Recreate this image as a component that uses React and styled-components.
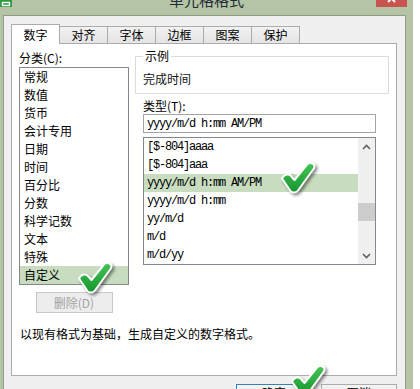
import React from 'react'
import styled, { createGlobalStyle } from 'styled-components'

const GlobalStyle = createGlobalStyle`
  * {
    margin: 0;
    padding: 0;
    box-sizing: border-box;
  }
  html, body {
    width: 420px;
    height: 389px;
    overflow: hidden;
    background: #fff;
  }
  body {
    font-family: "Noto Sans CJK SC", "Liberation Sans", sans-serif;
    font-size: 12px;
    color: #000;
  }
`

const mono = `"Liberation Mono", "Noto Sans CJK SC", monospace`

const Window = styled.div`
  position: relative;
  width: 413px;
  height: 389px;
  background: #b5c4a5;
  display: flex;
  flex-direction: column;
`
const TitleBar = styled.div`
  flex-shrink: 0;
  height: 15px;
  display: grid;
  grid-template-columns: 1fr auto 1fr;
  align-items: start;
  overflow: hidden;
`
const Title = styled.div`
  font-size: 15px;
  line-height: 16px;
  margin-top: -8px;
  color: #1f2b38;
  white-space: nowrap;
`
const CloseBox = styled.div`
  justify-self: end;
  width: 31px;
  height: 7px;
  margin-right: 6px;
  background: #c9534f;
  display: flex;
`
const Client = styled.div`
  flex-shrink: 0;
  height: 374px;
  margin: 0 7px 0 3px;
  background: #f0f0f0;
  border: 1px solid #8f9c84;
  border-bottom: none;
  padding: 8px 8px 0 7px;
  display: flex;
  flex-direction: column;
  overflow: hidden;
`
const TabRow = styled.div`
  flex-shrink: 0;
  height: 19px;
  display: flex;
  align-items: flex-end;
`
const Tab = styled.div`
  position: relative;
  z-index: ${p => (p.$active ? 2 : 1)};
  width: 49px;
  margin-left: -1px;
  &:first-child {
    margin-left: 0;
  }
  height: ${p => (p.$active ? '20px' : '17px')};
  margin-bottom: ${p => (p.$active ? '-1px' : '0')};
  border: 1px solid #acacac;
  border-bottom: none;
  background: ${p => (p.$active ? '#fff' : 'linear-gradient(#f2f2f2, #e4e4e4)')};
  display: flex;
  align-items: center;
  justify-content: center;
  line-height: 14px;
`
const Panel = styled.div`
  flex-shrink: 0;
  height: 333px;
  background: #fff;
  border: 1px solid #acacac;
  padding: 5px 7px 0;
  display: flex;
  flex-direction: column;
`
const Columns = styled.div`
  display: flex;
  gap: 6px;
`
const LeftCol = styled.div`
  width: 110px;
  display: flex;
  flex-direction: column;
`
const RightCol = styled.div`
  width: 254px;
  display: flex;
  flex-direction: column;
`
const Label = styled.div`
  line-height: 18px;
  height: 18px;
  white-space: nowrap;
`
const TypeLabel = styled(Label)`
  line-height: 14px;
  height: 14px;
  margin-top: 5px;
  padding-left: 8px;
`
const ListBox = styled.div`
  border: 1px solid #828790;
  background: #fff;
  overflow: hidden;
`
const CategoryList = styled(ListBox)`
  height: 218px;
`
const Option = styled.div`
  height: 18px;
  line-height: 18px;
  padding-left: 4px;
  white-space: nowrap;
  background: ${p => (p.$selected ? '#c8ddbf' : 'transparent')};
`
const FormatOption = styled(Option)`
  padding-left: 3px;
  font-family: ${mono};
  letter-spacing: -1.2px;
`
const DeleteButton = styled.button`
  width: 77px;
  height: 21px;
  margin: 7px auto 0;
  border: 1px solid #c9c9c9;
  background: #ededed;
  color: #a3a3a3;
  font: inherit;
  line-height: 14px;
`
const Sample = styled.fieldset`
  border: 1px solid #dcdcdc;
  padding: 7px 7px 5px;
  min-inline-size: auto;
`
const Legend = styled.legend`
  padding: 0 2px;
  line-height: 14px;
`
const SampleText = styled.div`
  line-height: 18px;
  color: #111;
`
const FormatInput = styled.input`
  width: 233px;
  height: 19px;
  margin: 1px 0 0 8px;
  border: 1px solid #a5a5a5;
  padding: 0 3px;
  font-family: ${mono};
  font-size: 12px;
  letter-spacing: -1.2px;
  color: #000;
  outline: none;
`
const FormatList = styled(ListBox)`
  width: 233px;
  height: 128px;
  margin: 4px 0 0 8px;
  display: flex;
`
const Options = styled.div`
  flex: 1;
`
const ScrollBar = styled.div`
  width: 17px;
  background: #f0f0f0;
  display: flex;
  flex-direction: column;
`
const ScrollArrow = styled.div`
  height: 17px;
  display: flex;
  align-items: center;
  justify-content: center;
`
const ScrollTrack = styled.div`
  flex: 1;
`
const Thumb = styled.div`
  height: 18px;
  margin-top: 48px;
  background: #cdcdcd;
`
const Hint = styled.div`
  margin-top: 12px;
  padding-left: 1px;
  line-height: 18px;
`
const ButtonRow = styled.div`
  flex-shrink: 0;
  margin-top: 8px;
  display: flex;
  justify-content: flex-end;
  gap: 9px;
`
const DialogButton = styled.button`
  width: 76px;
  height: 23px;
  border: 1px solid ${p => (p.$primary ? '#3c7fb1' : '#acacac')};
  background: linear-gradient(#f3f3f3, #e4e4e4);
  font: inherit;
  line-height: 14px;
  padding-top: 1px;
  display: flex;
  justify-content: center;
  align-items: flex-start;
`
const Check = styled.svg`
  position: absolute;
  left: ${p => p.$x}px;
  top: ${p => p.$y}px;
  overflow: visible;
  filter: drop-shadow(2px 2px 1.5px rgba(0, 0, 0, 0.45));
`

const CheckMark = ({ x, y }) => (
  <Check $x={x} $y={y} width="36" height="31" viewBox="0 0 36 31">
    <defs>
      <linearGradient id={`g${x}`} x1="0" y1="0" x2="0" y2="1">
        <stop offset="0" stopColor="#45c454" />
        <stop offset="1" stopColor="#15952e" />
      </linearGradient>
    </defs>
    <path
      d="M2 16.5 C4 12.5 8.5 11 11 14 L14.5 18 L27 2.5 C29.5 0 34.5 1 34.5 4.5 C34.5 5.5 34 6.5 33.5 7 L18 28.5 C16 31 12 31 10.5 29 Z"
      fill={`url(#g${x})`}
      stroke="#fff"
      strokeWidth="2"
      strokeLinejoin="round"
    />
  </Check>
)

const categories = ['常规', '数值', '货币', '会计专用', '日期', '时间', '百分比', '分数', '科学记数', '文本', '特殊', '自定义']
const formats = ['[$-804]aaaa', '[$-804]aaa', 'yyyy/m/d h:mm AM/PM', 'yyyy/m/d h:mm', 'yy/m/d', 'm/d', 'm/d/yy']
const tabs = ['数字', '对齐', '字体', '边框', '图案', '保护']

export default function App() {
  return (
    <Window>
      <GlobalStyle />
      <TitleBar>
        <svg width="12" height="7" viewBox="0 0 12 7">
          <rect width="12" height="7" fill="#2f9a3f" />
          <rect x="2.5" y="2.5" width="7" height="3" fill="none" stroke="#fff" strokeWidth="1.4" />
        </svg>
        <Title>单元格格式</Title>
        <CloseBox>
          <svg width="31" height="7" viewBox="0 0 31 7">
            <path d="M12 -5 L19 2 M19 -5 L12 2" stroke="#fff" strokeWidth="2" />
          </svg>
        </CloseBox>
      </TitleBar>
      <Client>
        <TabRow>
          {tabs.map((t, i) => (
            <Tab key={t} $active={i === 0}>{t}</Tab>
          ))}
        </TabRow>
        <Panel>
          <Columns>
            <LeftCol>
              <Label>分类(C):</Label>
              <CategoryList>
                {categories.map(c => (
                  <Option key={c} $selected={c === '自定义'}>{c}</Option>
                ))}
              </CategoryList>
              <DeleteButton>删除(D)</DeleteButton>
            </LeftCol>
            <RightCol>
              <Sample>
                <Legend>示例</Legend>
                <SampleText>完成时间</SampleText>
              </Sample>
              <TypeLabel>类型(T):</TypeLabel>
              <FormatInput readOnly value="yyyy/m/d h:mm AM/PM" />
              <FormatList>
                <Options>
                  {formats.map(f => (
                    <FormatOption key={f} $selected={f === 'yyyy/m/d h:mm AM/PM'}>{f}</FormatOption>
                  ))}
                </Options>
                <ScrollBar>
                  <ScrollArrow>
                    <svg width="9" height="6" viewBox="0 0 9 6">
                      <path d="M1 5 L4.5 1.5 L8 5" fill="none" stroke="#606060" strokeWidth="1.6" />
                    </svg>
                  </ScrollArrow>
                  <ScrollTrack>
                    <Thumb />
                  </ScrollTrack>
                  <ScrollArrow>
                    <svg width="9" height="6" viewBox="0 0 9 6">
                      <path d="M1 1 L4.5 4.5 L8 1" fill="none" stroke="#606060" strokeWidth="1.6" />
                    </svg>
                  </ScrollArrow>
                </ScrollBar>
              </FormatList>
            </RightCol>
          </Columns>
          <Hint>以现有格式为基础，生成自定义的数字格式。</Hint>
        </Panel>
        <ButtonRow>
          <DialogButton $primary>确定</DialogButton>
          <DialogButton>取消</DialogButton>
        </ButtonRow>
      </Client>
      <CheckMark x={77} y={262} />
      <CheckMark x={280} y={162} />
      <CheckMark x={290} y={365} />
    </Window>
  )
}
